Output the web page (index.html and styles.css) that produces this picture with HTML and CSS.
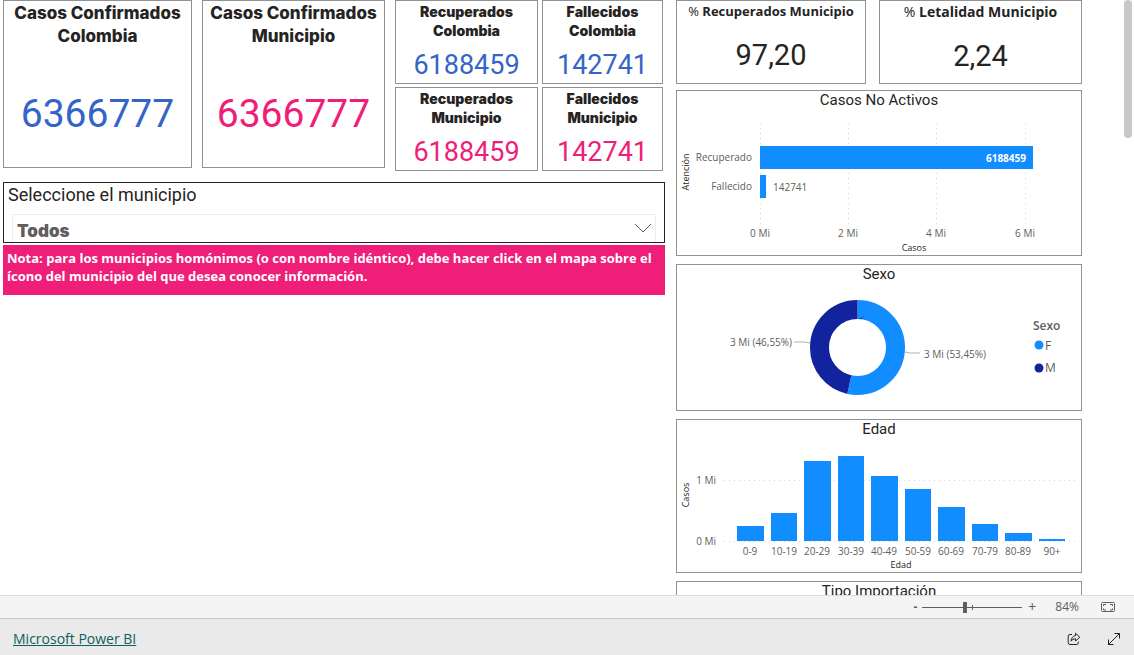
FILE: index.html
```html
<!DOCTYPE html>
<html lang="es">
<head>
<meta charset="utf-8">
<title>Microsoft Power BI</title>
<link rel="stylesheet" href="styles.css">
</head>
<body>
<main class="report">
  <div class="left">
    <section class="totals">
      <article class="card big blue"><h2>Casos Confirmados Colombia</h2><p>6366777</p></article>
      <article class="card big pink"><h2>Casos Confirmados Municipio</h2><p>6366777</p></article>
      <div class="small-cards">
        <article class="card small blue"><h2>Recuperados Colombia</h2><p>6188459</p></article>
        <article class="card small blue"><h2>Fallecidos Colombia</h2><p>142741</p></article>
        <article class="card small pink"><h2>Recuperados Municipio</h2><p>6188459</p></article>
        <article class="card small pink"><h2>Fallecidos Municipio</h2><p>142741</p></article>
      </div>
    </section>
    <section class="slicer">
      <label for="municipio">Seleccione el municipio</label>
      <div class="dropdown">
        <select id="municipio"><option>Todos</option></select>
        <svg class="chevron" viewBox="0 0 18 10" aria-hidden="true"><path d="M1 1l8 8 8-8"/></svg>
      </div>
    </section>
    <p class="note">Nota: para los municipios homónimos (o con nombre idéntico), debe hacer click en el mapa sobre el ícono del municipio del que desea conocer información.</p>
  </div>

  <div class="right">
    <section class="rates">
      <article class="card rate"><h2><span>%</span> Recuperados Municipio</h2><p>97,20</p></article>
      <article class="card rate large"><h2><span>%</span> Letalidad Municipio</h2><p>2,24</p></article>
    </section>

    <section class="card chart">
      <h2>Casos No Activos</h2>
      <svg viewBox="0 0 404 144" role="img" aria-label="Casos No Activos">
        <g class="grid"><path d="M83.5 12V114M171.5 12V114M259.5 12V114M348.5 12V114"/></g>
        <g class="bars"><rect x="83" y="35" width="273" height="23"/><rect x="83" y="64" width="6" height="23"/></g>
        <g class="tick end"><text x="75" y="50">Recuperado</text><text x="75" y="79">Fallecido</text></g>
        <text class="bar-value" x="349" y="51">6188459</text>
        <text class="tick" x="96" y="80">142741</text>
        <g class="tick mid"><text x="83" y="126">0 Mi</text><text x="171" y="126">2 Mi</text><text x="259" y="126">4 Mi</text><text x="348" y="126">6 Mi</text></g>
        <text class="axis" x="237" y="140">Casos</text>
        <text class="axis" transform="translate(12 61) rotate(-90)">Atención</text>
      </svg>
    </section>

    <section class="card chart">
      <h2>Sexo</h2>
      <svg viewBox="0 0 404 125" role="img" aria-label="Sexo">
        <g class="donut" transform="translate(180.5 62.5) rotate(-90)">
          <circle class="f" r="38" pathLength="10000" stroke-dasharray="5345 4655"/>
          <circle class="m" r="38" pathLength="10000" stroke-dasharray="4655 5345" stroke-dashoffset="-5345"/>
        </g>
        <path class="leader" d="M117 57h11l5 1M228 67l5 1h10"/>
        <text class="tick" x="53" y="61">3 Mi (46,55%)</text>
        <text class="tick" x="247" y="73">3 Mi (53,45%)</text>
        <text class="legend title" x="356" y="45">Sexo</text>
        <circle class="f-dot" cx="362" cy="60" r="4.500"/><text class="legend" x="368" y="65">F</text>
        <circle class="m-dot" cx="362" cy="83" r="4.500"/><text class="legend" x="368" y="87">M</text>
      </svg>
    </section>

    <section class="card chart">
      <h2>Edad</h2>
      <svg viewBox="0 0 404 132" role="img" aria-label="Edad">
        <g class="grid"><path d="M47 40.5H401M47 101.5H401"/></g>
        <g class="bars">
          <rect x="60" y="86" width="27" height="15"/><rect x="94" y="73" width="26" height="28"/>
          <rect x="127" y="21" width="27" height="80"/><rect x="161" y="16" width="26" height="85"/>
          <rect x="194" y="36" width="27" height="65"/><rect x="228" y="49" width="26" height="52"/>
          <rect x="261" y="67" width="27" height="34"/><rect x="295" y="84" width="26" height="17"/>
          <rect x="328" y="93" width="27" height="8"/><rect x="362" y="99" width="26" height="2"/>
        </g>
        <g class="tick end"><text x="39" y="44">1 Mi</text><text x="39" y="105">0 Mi</text></g>
        <g class="tick mid">
          <text x="73" y="115">0-9</text><text x="107" y="115">10-19</text><text x="140" y="115">20-29</text><text x="174" y="115">30-39</text><text x="207" y="115">40-49</text>
          <text x="241" y="115">50-59</text><text x="274" y="115">60-69</text><text x="308" y="115">70-79</text><text x="341" y="115">80-89</text><text x="375" y="115">90+</text>
        </g>
        <text class="axis" x="224" y="128">Edad</text>
        <text class="axis" transform="translate(12 55) rotate(-90)">Casos</text>
      </svg>
    </section>

    <section class="card chart last"><h2>Tipo Importación</h2></section>
  </div>
  <div class="scrollbar"></div>
</main>

<div class="zoombar">
  <button type="button" class="minus" aria-label="Alejar">-</button>
  <input type="range" min="0" max="100" value="42" aria-label="Zoom">
  <button type="button" class="plus" aria-label="Acercar">+</button>
  <span class="percent">84%</span>
  <button type="button" class="fit" aria-label="Ajustar a la página">
    <svg width="14" height="11" viewBox="0 0 14 11"><rect x=".5" y=".5" width="13" height="9" rx="1"/><path d="M2.5 4V2.5H5M9 2.5h2.500V4M11.500 6.500V8H9M5 8H2.500V6.500"/></svg>
  </button>
</div>

<footer class="footer">
  <a href="#">Microsoft Power BI</a>
  <button type="button" aria-label="Compartir">
    <svg width="14" height="14" viewBox="0 0 14 14"><path d="M5 2.500H3A1.800 1.800 0 0 0 1.200 4.300v6.400A1.800 1.800 0 0 0 3 12.500h6.500a1.800 1.800 0 0 0 1.800-1.800V9.500M8.500 1.300l4.300 3.900-4.300 3.800V6.800C6.500 6.800 5.200 7.600 4 9.200c.3-3 1.800-5.200 4.500-5.600z"/></svg>
  </button>
  <button type="button" aria-label="Pantalla completa">
    <svg width="14" height="14" viewBox="0 0 14 14"><path d="M1.500 12.500l11-11M7.500 1.500h5v5M1.500 7.500v5h5"/></svg>
  </button>
</footer>
</body>
</html>
```
FILE: styles.css
```css
* { box-sizing: border-box; }
body {
  margin: 0;
  height: 100vh;
  display: flex;
  flex-direction: column;
  background: #fff;
  color: #252423;
  font-family: "Open Sans", sans-serif;
}
h2, p { margin: 0; }
button { border: 0; padding: 0; background: none; color: inherit; font: inherit; }
svg { display: block; }

.report {
  position: relative;
  flex: 1;
  min-height: 0;
  overflow: hidden;
  display: grid;
  grid-template-columns: 662fr 406fr;
  align-items: start;
  column-gap: 11px;
  padding: 0 52px 0 3px;
}
.scrollbar {
  position: absolute;
  top: 0;
  right: 2px;
  width: 8px;
  height: 138px;
  border-radius: 4px;
  background: #c8c8c8;
}
.card { border: 1px solid #919191; background: #fff; text-align: center; }
.card p { font-family: Roboto, sans-serif; }
.blue p { color: #3464c8; }
.pink p { color: #ee1e79; }

.totals {
  display: grid;
  grid-template-columns: 189fr 183fr 268fr;
  column-gap: 10px;
  align-items: start;
  padding-right: 2px;
}
.big { height: 168px; }
.big h2 { padding: 1px 4px 0; font: 800 17px/23px Inter, sans-serif; }
.big p { font-size: 39px; line-height: 48px; margin-top: 42px; }
.small-cards { display: grid; grid-template-columns: 143fr 121fr; gap: 3px 4px; }
.small { height: 84px; padding: 1px 8px 0; }
.small h2 { font: 900 14px/19px Inter, sans-serif; }
.small p { font-size: 27px; line-height: 32px; margin-top: 9px; }

.slicer { margin-top: 11px; border: 1px solid #252423; padding: 0 8px; height: 61px; overflow: hidden; }
.slicer label { display: block; margin-left: -4px; font: 18px/23px Roboto, sans-serif; }
.dropdown { position: relative; margin-top: 8px; }
.dropdown select {
  width: 100%;
  height: 34px;
  padding: 0 4px;
  border: 1px solid #eee;
  border-radius: 0;
  background: #fff;
  color: #605e5c;
  appearance: none;
  font: 900 17px/20px Inter, sans-serif;
}
.chevron { position: absolute; right: 4px; top: 9px; width: 18px; height: 10px; fill: none; stroke: #605e5c; pointer-events: none; }
.note { margin-top: 2px; height: 50px; padding: 4px; background: #ee1e79; color: #fff; font-size: 13px; font-weight: 700; line-height: 18px; }

.rates { display: grid; grid-template-columns: 190fr 203fr; column-gap: 13px; }
.rate { height: 84px; }
.rate h2 { font-size: 13px; line-height: 20px; font-weight: 700; }
.rate.large h2 { font-size: 14px; line-height: 22px; }
.rate h2 span { font-weight: 400; }
.rate p { font-size: 29px; line-height: 36px; margin-top: 16px; }
.rate.large p { margin-top: 15px; }

.chart { margin-top: 8px; }
.rates + .chart { margin-top: 6px; }
.chart h2 { padding-bottom: 2px; font: 400 15px/18px Roboto, sans-serif; }
.chart.last { height: 160px; }
.chart svg { width: 100%; height: auto; }
.grid path { stroke: #d4d4d4; stroke-dasharray: 1 4; }
.bars { fill: #118dff; }
.tick { font-size: 10px; fill: #605e5c; }
.end { text-anchor: end; }
.mid { text-anchor: middle; }
.bar-value { font-size: 10px; font-weight: 700; fill: #fff; text-anchor: end; }
.axis { font-size: 9px; fill: #252423; text-anchor: middle; }
.donut circle { fill: none; stroke-width: 19px; }
.donut .f { stroke: #118dff; }
.donut .m { stroke: #12239e; }
.f-dot { fill: #118dff; }
.m-dot { fill: #12239e; }
.leader { fill: none; stroke: #b3b0ad; }
.legend { font-size: 12px; fill: #605e5c; }
.legend.title { font-weight: 600; }

.zoombar {
  display: flex;
  align-items: center;
  justify-content: flex-end;
  height: 23px;
  padding-right: 19px;
  border-top: 1px solid #dcdcdc;
  background: #f4f4f4;
  color: #605e5c;
  font-size: 12px;
  line-height: 20px;
}
.zoombar .minus { font-weight: 700; }
.zoombar input {
  width: 100px;
  height: 12px;
  margin: 0 5px;
  appearance: none;
  background:
    linear-gradient(#605e5c, #605e5c) center / 1px 5px no-repeat,
    linear-gradient(#605e5c, #605e5c) center / 100% 1px no-repeat;
}
.zoombar input::-webkit-slider-thumb { appearance: none; width: 4px; height: 11px; background: #605e5c; }
.zoombar .plus { width: 10px; font-size: 14px; }
.percent { margin: 0 22px 0 18px; }
.fit svg { fill: none; stroke: #605e5c; }

.footer {
  display: flex;
  align-items: center;
  height: 37px;
  padding: 3px 13px 0;
  border-top: 1px solid #c8c8c8;
  background: #eaeaea;
  font-size: 14px;
}
.footer a { margin-right: auto; color: #0f5f5a; }
.footer button { margin-left: 26px; }
.footer svg { fill: none; stroke: #252423; }
```
